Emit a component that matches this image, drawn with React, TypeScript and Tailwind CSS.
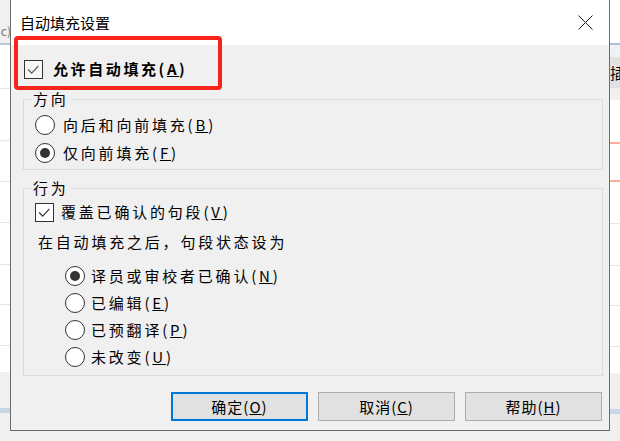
import React from 'react';

const TXT = 'text-[15px] leading-5 tracking-[2.8px] text-black whitespace-nowrap';

const Radio: React.FC<{ checked?: boolean }> = ({ checked }) => (
  <span className="flex h-5 w-5 shrink-0 items-center justify-center rounded-full border border-[#333333] bg-white">
    {checked && <span className="h-[10px] w-[10px] rounded-full bg-[#333333]" />}
  </span>
);

const Checkbox: React.FC<{ muted?: boolean }> = ({ muted }) => (
  <span
    className={`flex h-[19px] w-[19px] shrink-0 items-center justify-center border border-[#333333] ${
      muted ? 'bg-[#f7f7f7]' : 'bg-white'
    }`}
  >
    <svg viewBox="0 0 19 19" className="h-[19px] w-[19px]">
      <path d="M3.5 9.5 L7.5 13.5 L15 5.5" stroke={muted ? '#555555' : '#333333'} strokeWidth="1.3" fill="none" />
    </svg>
  </span>
);

// label with an underlined mnemonic letter
const Label: React.FC<{ text: string; mn: string; className?: string }> = ({ text, mn, className }) => (
  <span className={className ?? TXT}>
    {text}(<span className="underline underline-offset-[1px]">{mn}</span>)
  </span>
);

const RadioRow: React.FC<{ checked?: boolean; text: string; mn: string; gap: string; className?: string }> = ({
  checked,
  text,
  mn,
  gap,
  className,
}) => (
  <div className={`flex h-5 items-center ${gap} ${className ?? ''}`}>
    <Radio checked={checked} />
    <Label text={text} mn={mn} />
  </div>
);

const Button: React.FC<{ text: string; mn: string; primary?: boolean }> = ({ text, mn, primary }) => (
  <button
    className={`flex h-[29px] w-[137px] items-center justify-center bg-[#e1e1e1] ${
      primary ? 'border-2 border-[#0078d7]' : 'border border-[#adadad]'
    }`}
  >
    <span className="text-[15px] leading-5 tracking-[1px] text-black">
      {text}(<span className="underline underline-offset-[1px]">{mn}</span>)
    </span>
  </button>
);

const LeftStrip = () => (
  <div className="flex w-[10px] shrink-0 flex-col overflow-hidden">
    <div className="flex h-[43px] items-end justify-end bg-[#f0f0f0] pb-[4px] text-[12px] leading-4 text-[#777777]">
      <span className="-mr-[1px]">c)</span>
    </div>
    <div className="h-[2px] bg-[#b9c9da]" />
    <div className="h-[44px] border-b border-[#e6e6e6] bg-white" />
    <div className="h-[52px] border-b border-[#e6e6e6] bg-white" />
    <div className="h-[41px] border-b border-[#e6e6e6] bg-white" />
    <div className="h-[41px] border-b border-[#e6e6e6] bg-white" />
    <div className="h-[42px] border-b border-[#e6e6e6] bg-white" />
    <div className="h-[40px] border-b border-[#e6e6e6] bg-white" />
    <div className="h-[41px] border-b border-[#e6e6e6] bg-white" />
    <div className="h-[26px] bg-white" />
    <div className="h-[36px] bg-[#f0f0f0]" />
    <div className="h-[5px] bg-[#c9d6ea]" />
    <div className="flex-1 bg-[#f0f0f0]" />
  </div>
);

const RightStrip = () => (
  <div className="flex w-[10px] shrink-0 flex-col overflow-hidden">
    <div className="h-[43px] bg-white" />
    <div className="h-[2px] bg-[#aac0dc]" />
    <div className="h-[12px] bg-[#eef2f7]" />
    <div className="flex h-[31px] items-center overflow-hidden whitespace-nowrap bg-[#e1e1e1]">
      <span className="text-[15px] leading-5 text-black">插入</span>
    </div>
    <div className="h-[12px] bg-[#f0f0f0]" />
    <div className="h-[42px] bg-white" />
    <div className="h-[2px] bg-[#f9b196]" />
    <div className="h-[36px] bg-white" />
    <div className="h-[2px] bg-[#f9b196]" />
    <div className="h-[42px] border-b border-[#e6e6e6] bg-white" />
    <div className="h-[42px] border-b border-[#e6e6e6] bg-white" />
    <div className="h-[40px] border-b border-[#e6e6e6] bg-white" />
    <div className="h-[41px] border-b border-[#e6e6e6] bg-white" />
    <div className="h-[26px] bg-white" />
    <div className="h-[36px] bg-[#f0f0f0]" />
    <div className="h-[5px] bg-[#c9d6ea]" />
    <div className="flex-1 bg-[#f0f0f0]" />
  </div>
);

const App: React.FC = () => {
  return (
    <div className="flex h-[441px] w-[620px] flex-col overflow-hidden bg-[#f0f0f0] font-['Noto_Sans_CJK_SC',sans-serif]">
      <div className="flex h-[431px]">
        <LeftStrip />

        {/* dialog window */}
        <div className="relative flex w-[600px] shrink-0 flex-col border-x border-b border-[#6b6b6b] bg-[#f0f0f0]">
          <div className="flex h-[45px] shrink-0 items-center justify-between bg-white pl-[9px] pr-[16px]">
            <span className="text-[15px] leading-5 text-black">自动填充设置</span>
            <svg viewBox="0 0 15 15" className="h-[15px] w-[15px]">
              <path d="M0.5 0.5 L14.5 14.5 M14.5 0.5 L0.5 14.5" stroke="#1a1a1a" strokeWidth="1" />
            </svg>
          </div>

          <div className="flex flex-1 flex-col pl-[12px] pr-[6px]">
            <div className="mt-[14px] ml-[1px] flex h-5 items-center gap-[10px]">
              <Checkbox muted />
              <Label text="允许自动填充" mn="A" className="text-[15px] font-bold leading-5 tracking-[2.6px] text-black" />
            </div>

            <fieldset className="mt-[10px] border border-[#dcdcdc] pb-[6px] pl-[7px]">
              <legend className="px-[2px] text-[15px] leading-5 tracking-[2.8px] text-black">方向</legend>
              <RadioRow text="向后和向前填充" mn="B" gap="gap-[8px]" className="mt-[6px] ml-[4px]" />
              <RadioRow checked text="仅向前填充" mn="F" gap="gap-[8px]" className="mt-[8px] ml-[4px]" />
            </fieldset>

            <fieldset className="mt-[8px] border border-[#dcdcdc] pb-[8px] pl-[7px]">
              <legend className="px-[2px] text-[15px] leading-5 tracking-[2.8px] text-black">行为</legend>
              <div className="mt-[4px] ml-[4px] flex h-5 items-center gap-[7px]">
                <Checkbox />
                <Label text="覆盖已确认的句段" mn="V" />
              </div>
              <div className={`mt-[10px] ml-[7px] h-5 ${TXT}`}>在自动填充之后，句段状态设为</div>
              <RadioRow checked text="译员或审校者已确认" mn="N" gap="gap-[6px]" className="mt-[14px] ml-[34px]" />
              <RadioRow text="已编辑" mn="E" gap="gap-[6px]" className="mt-[7px] ml-[34px]" />
              <RadioRow text="已预翻译" mn="P" gap="gap-[6px]" className="mt-[7px] ml-[34px]" />
              <RadioRow text="未改变" mn="U" gap="gap-[6px]" className="mt-[7px] ml-[34px]" />
            </fieldset>

            <div className="mt-[16px] flex justify-end gap-[10px] pr-[1px]">
              <Button primary text="确定" mn="O" />
              <Button text="取消" mn="C" />
              <Button text="帮助" mn="H" />
            </div>
          </div>

          {/* red annotation frame */}
          <div className="pointer-events-none absolute left-[3px] top-[36px] h-[54px] w-[208px] rounded-[4px] border-[4px] border-[#f7241c]" />
        </div>

        <RightStrip />
      </div>
      <div className="flex-1 bg-[#f0f0f0]" />
    </div>
  );
};

export default App;
